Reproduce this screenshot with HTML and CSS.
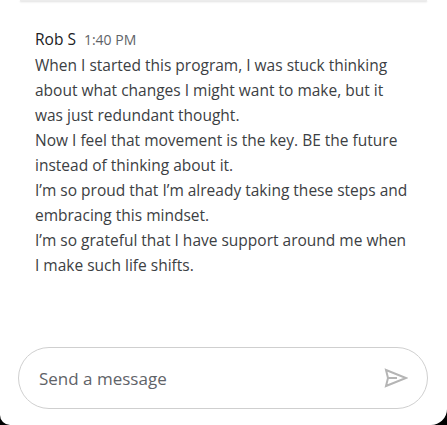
FILE: index.html
```html
<!DOCTYPE html>
<html>
<head>
<meta charset="utf-8">
<link rel="stylesheet" href="styles.css">
</head>
<body>
<div class="screen">
  <div class="topcard"></div>
  <div class="message">
    <div class="meta"><span class="name">Rob S</span><span class="time">1:40 PM</span></div>
    <div class="body">
      <p>When I started this program, I was stuck thinking about what changes I might want to make, but it was just redundant thought.</p>
      <p>Now I feel that movement is the key. BE the future instead of thinking about it.</p>
      <p>I’m so proud that I’m already taking these steps and embracing this mindset.</p>
      <p>I’m so grateful that I have support around me when I make such life shifts.</p>
    </div>
  </div>
  <div class="composer">
    <div class="input">
      <span class="placeholder">Send a message</span>
      <svg class="send" width="24" height="20" viewBox="0 0 24 20">
        <path d="M2 2 L22 10 L2 18 L4 10 Z M4 10 L13 10" fill="none" stroke="#b5b5b5" stroke-width="2" stroke-linejoin="miter"/>
      </svg>
    </div>
  </div>
</div>
</body>
</html>
```
FILE: styles.css
```css
html, body {
  margin: 0;
  padding: 0;
  background: #000;
}
.screen {
  width: 447px;
  height: 425px;
  background: #fff;
  border-radius: 0 0 16px 10px;
  overflow: hidden;
  display: flex;
  flex-direction: column;
  font-family: "Open Sans", Roboto, sans-serif;
}
.topcard {
  height: 0;
  margin: 0 20px;
  box-shadow: 0 1px 2px rgba(0,0,0,0.18);
  border-bottom: 1px solid #ececec;
}
.message {
  padding: 27px 0 0 35px;
  width: 375px;
}
.meta {
  display: flex;
  align-items: baseline;
  gap: 8px;
  height: 24px;
}
.name {
  font-size: 15.5px;
  color: #202124;
}
.time {
  font-size: 14px;
  color: #5f6368;
}
.body {
  margin-top: 1px;
  font-size: 15.5px;
  line-height: 25px;
  color: #3c4043;
}
.body p {
  margin: 0;
}
.composer {
  margin-top: auto;
  padding: 0 19px 16px 18px;
}
.input {
  height: 60px;
  border: 1px solid #cfcfcf;
  border-radius: 31px;
  display: flex;
  align-items: center;
  padding: 0 19px 0 20px;
}
.placeholder {
  flex: 1;
  font-size: 17px;
  color: #5f6368;
}
.send {
  display: block;
}
```
